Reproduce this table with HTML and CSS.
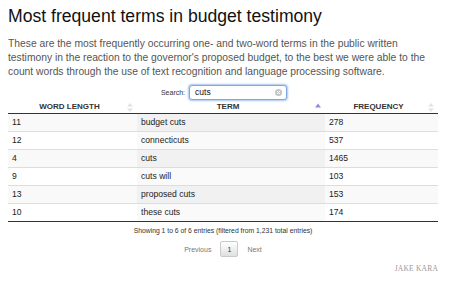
FILE: index.html
```html
<!DOCTYPE html>
<html lang="en">
<head>
<meta charset="utf-8">
<title>Most frequent terms in budget testimony</title>
<link rel="stylesheet" href="styles.css">
</head>
<body>
<div class="page">
  <h1 class="title">Most frequent terms in budget testimony</h1>
  <p class="intro">These are the most frequently occurring one- and two-word terms in the public written testimony in the reaction to the governor's proposed budget, to the best we were able to the count words through the use of text recognition and language processing software.</p>
  <div class="dt">
    <div class="filter">
      <span class="filter-label">Search:</span>
      <span class="search"><span class="query">cuts</span><span class="clear"><svg width="7" height="7" viewBox="0 0 7 7"><circle cx="3.5" cy="3.5" r="3.5" fill="#c4c4c4"/><path d="M2 2L5 5M5 2L2 5" stroke="#fff" stroke-width="1"/></svg></span></span>
    </div>
    <table class="grid">
      <thead>
        <tr>
          <th class="col-len"><div class="th-in"><span class="lbl">WORD LENGTH</span><svg class="sort" width="6" height="9" viewBox="0 0 6 9"><path d="M3 0L6 3.5H0Z" fill="#e3e3e3"/><path d="M3 9L6 5.5H0Z" fill="#e3e3e3"/></svg></div></th>
          <th class="col-term"><div class="th-in"><span class="lbl">TERM</span><svg class="sort" width="6" height="9" viewBox="0 0 6 9"><path d="M3 0.5L6 4.5H0Z" fill="#8f8fe0"/></svg></div></th>
          <th class="col-freq"><div class="th-in"><span class="lbl">FREQUENCY</span><svg class="sort" width="6" height="9" viewBox="0 0 6 9"><path d="M3 0L6 3.5H0Z" fill="#e3e3e3"/><path d="M3 9L6 5.5H0Z" fill="#e3e3e3"/></svg></div></th>
        </tr>
      </thead>
      <tbody>
        <tr class="odd"><td>11</td><td class="sorted">budget cuts</td><td>278</td></tr>
        <tr class="even"><td>12</td><td class="sorted">connecticuts</td><td>537</td></tr>
        <tr class="odd"><td>4</td><td class="sorted">cuts</td><td>1465</td></tr>
        <tr class="even"><td>9</td><td class="sorted">cuts will</td><td>103</td></tr>
        <tr class="odd"><td>13</td><td class="sorted">proposed cuts</td><td>153</td></tr>
        <tr class="even"><td>10</td><td class="sorted">these cuts</td><td>174</td></tr>
      </tbody>
    </table>
    <div class="info">Showing 1 to 6 of 6 entries (filtered from 1,231 total entries)</div>
    <div class="paging">
      <span class="pg-link">Previous</span>
      <span class="pg-current">1</span>
      <span class="pg-link">Next</span>
    </div>
    <div class="credit">Jake Kara</div>
  </div>
</div>
</body>
</html>
```

FILE: styles.css
```css
html, body {
  margin: 0;
  padding: 0;
  background: #fff;
}

body {
  font-family: "Liberation Sans", Arial, Helvetica, sans-serif;
  color: #222;
}

.page {
  padding: 0 8px;
  width: 430px;
}

.title {
  margin: 6px 0 0;
  font-size: 17.6px;
  line-height: 20px;
  font-weight: normal;
  color: #111;
}

.intro {
  margin: 11px 0 0;
  font-size: 10.3px;
  line-height: 14px;
  color: #555;
  width: 425px;
}

.dt {
  width: 430px;
}

.filter {
  display: flex;
  justify-content: center;
  align-items: center;
  gap: 4px;
  margin-top: 5px;
  height: 16px;
  padding-left: 2px;
}

.filter-label {
  font-size: 7px;
  color: #333;
}

.search {
  display: flex;
  align-items: center;
  box-sizing: border-box;
  width: 98px;
  height: 15px;
  border: 1px solid #7fa6e3;
  border-radius: 3px;
  box-shadow: 0 0 2px 1px #a9c6f1;
  padding: 0 4px 0 5px;
  background: #fff;
}

.query {
  flex: 1;
  font-size: 8.5px;
  color: #111;
}

.clear {
  display: flex;
}

.grid {
  width: 430px;
  border-collapse: collapse;
  table-layout: fixed;
}

.grid th,
.grid td {
  box-sizing: border-box;
}

.col-len { width: 129px; }
.col-term { width: 188px; }
.col-freq { width: 113px; }

.grid th {
  padding: 2px 4px 1px 4px;
  height: 13px;
  font-size: 8px;
  line-height: 10px;
  font-weight: bold;
  color: #333;
  border-bottom: 1px solid #333;
}

.th-in {
  display: flex;
  align-items: center;
}

.lbl {
  flex: 1;
  text-align: center;
}

.sort {
  flex: none;
}

.grid td {
  padding: 0 4px;
  height: 18px;
  font-size: 8.6px;
  line-height: 17px;
  color: #222;
  border-top: 1px solid #ddd;
}

.grid tbody tr:first-child td {
  border-top: 0;
}

.grid tbody tr:last-child td {
  border-bottom: 1px solid #333;
}

.grid tr.odd td {
  background: #f9f9f9;
}

.grid tr.odd td.sorted {
  background: #f1f1f1;
}

.grid tr.even td.sorted {
  background: #fafafa;
}

.info {
  margin-top: 4px;
  text-align: center;
  font-size: 6.8px;
  line-height: 10px;
  color: #333;
}

.paging {
  display: flex;
  justify-content: center;
  align-items: center;
  gap: 9px;
  margin-top: 5px;
  font-size: 7px;
}

.pg-link {
  color: #777;
}

.pg-current {
  box-sizing: border-box;
  width: 18px;
  height: 16px;
  display: flex;
  align-items: center;
  justify-content: center;
  border: 1px solid #cacaca;
  border-radius: 2px;
  background: linear-gradient(#fff, #e0e0e0);
  color: #333;
}

.credit {
  margin-top: 7px;
  text-align: right;
  font-family: "Liberation Serif", "Times New Roman", serif;
  font-size: 7.5px;
  text-transform: uppercase;
  letter-spacing: 0.2px;
  color: #999;
}
```
